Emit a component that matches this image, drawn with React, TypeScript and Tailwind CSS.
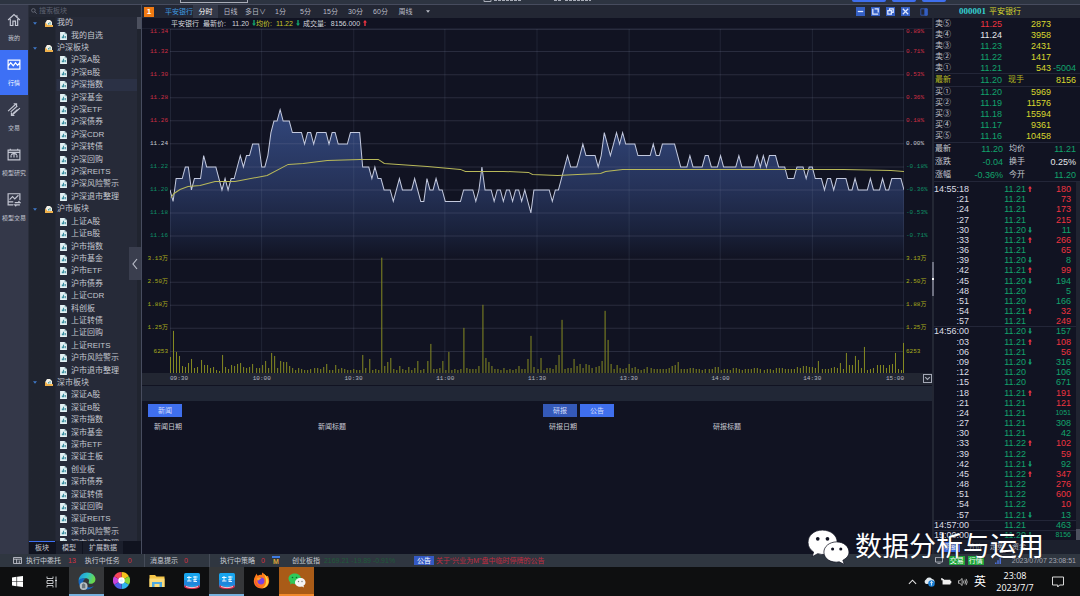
import { useState } from 'react'
import type { ReactNode } from 'react'

interface TreeGroup {
  name: string
  items: string[]
}

interface Trade {
  time: string
  price: string
  dir?: 'up' | 'down'
  vol: string
  red?: boolean
}

const TREE: TreeGroup[] = [
  { name: '我的', items: ['我的自选'] },
  {
    name: '沪深板块',
    items: ['沪深A股', '沪深B股', '沪深指数', '沪深基金', '沪深ETF', '沪深债券', '沪深CDR', '沪深转债', '沪深回购', '沪深REITS', '沪深风险警示', '沪深退市整理'],
  },
  {
    name: '沪市板块',
    items: ['上证A股', '上证B股', '沪市指数', '沪市基金', '沪市ETF', '沪市债券', '上证CDR', '科创板', '上证转债', '上证回购', '上证REITS', '沪市风险警示', '沪市退市整理'],
  },
  {
    name: '深市板块',
    items: ['深证A股', '深证B股', '深市指数', '深市基金', '深市ETF', '深证主板', '创业板', '深市债券', '深证转债', '深证回购', '深证REITS', '深市风险警示'],
  },
]

const PERIODS = ['分时', '日线', '多日∨', '1分', '5分', '15分', '30分', '60分', '周线']
const TIMES = ['09:30', '10:00', '10:30', '11:00', '11:30', '13:30', '14:00', '14:30']

const PRICE_LABELS = ['11.34', '11.32', '11.30', '11.28', '11.26', '11.24', '11.22', '11.20', '11.18', '11.16']
const PERCENT_LABELS = ['0.89%', '0.71%', '0.53%', '0.36%', '0.18%', '0.00%', '-0.18%', '-0.36%', '-0.53%', '-0.71%']
const VOLUME_LABELS = ['3.13万', '2.50万', '1.88万', '1.25万', '6253']

// [minute of session, cents above 11.00]
const PRICES: [number, number][] = [
  [0, 20], [1, 19], [2, 21], [4, 21], [5, 22], [6, 22], [7, 20], [8, 21], [10, 21], [11, 23], [12, 22], [15, 22],
  [17, 20], [18, 21], [19, 20], [20, 21], [21, 21], [23, 23], [24, 22], [25, 23], [26, 23], [27, 24], [29, 24],
  [30, 22], [31, 22], [32, 23], [33, 25], [34, 26], [35, 26], [36, 27], [37, 26], [39, 26], [40, 25], [43, 25],
  [44, 24], [45, 25], [46, 25], [47, 24], [48, 25], [51, 25], [52, 24], [53, 25], [54, 25], [55, 24], [58, 24],
  [59, 25], [62, 25], [63, 22], [65, 22], [66, 21], [67, 22], [68, 21], [69, 21], [70, 20], [72, 20], [73, 19],
  [75, 21], [76, 20], [79, 20], [80, 21], [82, 19], [83, 19], [84, 21], [85, 20], [86, 20], [87, 21], [88, 20],
  [89, 20], [90, 19], [95, 19], [96, 20], [99, 20], [100, 19], [101, 20], [102, 22], [103, 20], [105, 20],
  [106, 19], [107, 20], [108, 20], [109, 19], [110, 20], [111, 20], [112, 19], [113, 20], [114, 20], [115, 19],
  [116, 20], [117, 19], [118, 18], [119, 20], [124, 20], [125, 19], [126, 20], [127, 20], [128, 21], [130, 23],
  [131, 22], [133, 22], [134, 23], [135, 24], [136, 23], [139, 23], [140, 22], [141, 23], [142, 25], [144, 23],
  [145, 24], [146, 25], [147, 24], [148, 25], [149, 24], [152, 24], [153, 23], [157, 23], [158, 24], [159, 23],
  [160, 23], [161, 24], [165, 24], [167, 22], [169, 22], [170, 23], [171, 22], [174, 22], [175, 23], [176, 23],
  [177, 22], [179, 22], [180, 23], [181, 22], [185, 22], [186, 23], [187, 22], [191, 22], [192, 23], [193, 22],
  [194, 23], [195, 22], [196, 23], [198, 23], [199, 22], [201, 22], [202, 21], [204, 21], [205, 22], [207, 22],
  [208, 21], [209, 22], [210, 22], [211, 21], [213, 21], [214, 20], [215, 21], [216, 21], [217, 20], [218, 21],
  [221, 21], [222, 20], [223, 20], [224, 21], [225, 20], [228, 20], [229, 21], [230, 20], [232, 20], [233, 21],
  [234, 20], [235, 20], [236, 21], [239, 21], [240, 20],
]

const AVERAGE =
  '1,168 4,164 10,160 18,157 30,156 45,152 65,152 97,146 118,135 133,134 157,131 190,130 208,130 214,134 257,137 290,140 295,142 333,142 358,143 362,145 387,146 407,145 430,144 435,142 452,140 503,140 673,140 720,141 733,142'

const VOLUMES = [
  16, 42, 21, 17, 7, 6, 10, 14, 5, 6, 13, 8, 8, 5, 6, 3, 2, 18, 6, 4, 8, 7, 9, 10, 6, 5, 6, 9, 5, 5,
  8, 12, 5, 20, 17, 5, 12, 11, 11, 7, 5, 3, 5, 4, 3, 3, 4, 5, 5, 4, 6, 9, 3, 3, 8, 4, 5, 4, 3, 3,
  4, 3, 3, 18, 5, 14, 3, 4, 3, 115, 7, 11, 15, 4, 3, 7, 4, 3, 6, 3, 5, 12, 3, 4, 12, 29, 4, 4, 5, 12,
  3, 21, 3, 4, 3, 4, 45, 5, 4, 4, 4, 7, 68, 15, 11, 7, 4, 4, 3, 5, 3, 4, 3, 4, 7, 4, 4, 14, 37, 6,
  4, 15, 3, 5, 5, 4, 8, 18, 53, 4, 5, 5, 14, 7, 9, 5, 9, 8, 5, 6, 7, 12, 62, 33, 9, 4, 8, 5, 4, 5,
  9, 5, 6, 4, 3, 4, 6, 5, 4, 4, 4, 4, 4, 5, 7, 8, 11, 4, 4, 4, 5, 5, 4, 4, 3, 4, 4, 4, 6, 6,
  3, 4, 4, 3, 5, 5, 4, 3, 4, 4, 4, 5, 5, 4, 3, 4, 4, 3, 5, 5, 5, 4, 4, 4, 4, 6, 5, 7, 7, 6,
  6, 5, 12, 4, 4, 4, 5, 6, 5, 10, 4, 20, 8, 8, 17, 13, 5, 26, 3, 4, 5, 8, 8, 8, 5, 8, 9, 20, 4, 3, 30,
]

const ASKS = [
  { label: '卖⑤', price: '11.25', color: 'text-[#ee3340]', vol: '2873' },
  { label: '卖④', price: '11.24', color: 'text-gray-200', vol: '3958' },
  { label: '卖③', price: '11.23', color: 'text-[#12a36c]', vol: '2431' },
  { label: '卖②', price: '11.22', color: 'text-[#12a36c]', vol: '1417' },
  { label: '卖①', price: '11.21', color: 'text-[#12a36c]', vol: '543', change: '-5004' },
]

const BIDS = [
  { label: '买①', price: '11.20', color: 'text-[#12a36c]', vol: '5969' },
  { label: '买②', price: '11.19', color: 'text-[#12a36c]', vol: '11576' },
  { label: '买③', price: '11.18', color: 'text-[#12a36c]', vol: '15594' },
  { label: '买④', price: '11.17', color: 'text-[#12a36c]', vol: '9361' },
  { label: '买⑤', price: '11.16', color: 'text-[#12a36c]', vol: '10458' },
]

const STATS = [
  { a: '最新', av: '11.20', b: '均价', bv: '11.21', color: 'text-[#12a36c]' },
  { a: '涨跌', av: '-0.04', b: '换手', bv: '0.25%', color: 'text-gray-200' },
  { a: '涨幅', av: '-0.36%', b: '今开', bv: '11.20', color: 'text-[#12a36c]' },
]

const TRADES: Trade[] = [
  { time: '14:55:18', price: '11.21', dir: 'up', vol: '180', red: true },
  { time: ':21', price: '11.21', vol: '73', red: true },
  { time: ':24', price: '11.21', vol: '173', red: true },
  { time: ':27', price: '11.21', vol: '215', red: true },
  { time: ':30', price: '11.20', dir: 'down', vol: '11' },
  { time: ':33', price: '11.21', dir: 'up', vol: '266', red: true },
  { time: ':36', price: '11.21', vol: '65', red: true },
  { time: ':39', price: '11.20', dir: 'down', vol: '8' },
  { time: ':42', price: '11.21', dir: 'up', vol: '99', red: true },
  { time: ':45', price: '11.20', dir: 'down', vol: '194' },
  { time: ':48', price: '11.20', vol: '5' },
  { time: ':51', price: '11.20', vol: '166' },
  { time: ':54', price: '11.21', dir: 'up', vol: '32', red: true },
  { time: ':57', price: '11.21', vol: '249', red: true },
  { time: '14:56:00', price: '11.20', dir: 'down', vol: '157' },
  { time: ':03', price: '11.21', dir: 'up', vol: '108', red: true },
  { time: ':06', price: '11.21', vol: '56', red: true },
  { time: ':09', price: '11.20', dir: 'down', vol: '316' },
  { time: ':12', price: '11.20', vol: '106' },
  { time: ':15', price: '11.20', vol: '671' },
  { time: ':18', price: '11.21', dir: 'up', vol: '191', red: true },
  { time: ':21', price: '11.21', vol: '121', red: true },
  { time: ':24', price: '11.21', vol: '1051' },
  { time: ':27', price: '11.21', vol: '308' },
  { time: ':30', price: '11.21', vol: '42' },
  { time: ':33', price: '11.22', dir: 'up', vol: '102', red: true },
  { time: ':39', price: '11.22', vol: '59', red: true },
  { time: ':42', price: '11.21', dir: 'down', vol: '92' },
  { time: ':45', price: '11.22', dir: 'up', vol: '347', red: true },
  { time: ':48', price: '11.22', vol: '276', red: true },
  { time: ':51', price: '11.22', vol: '600', red: true },
  { time: ':54', price: '11.22', vol: '10', red: true },
  { time: ':57', price: '11.21', dir: 'down', vol: '13' },
  { time: '14:57:00', price: '11.21', vol: '463' },
  { time: '15:00:00', price: '11.20', dir: 'down', vol: '8156' },
]

function Arrow({ dir }: { dir: 'up' | 'down' }) {
  return (
    <svg viewBox="0 0 4 6" className={dir === 'up' ? 'w-1 h-[6px] shrink-0 text-[#ee3340]' : 'w-1 h-[6px] shrink-0 rotate-180 text-[#12a36c]'}>
      <path d="M2 0L4 2.6H2.7V6H1.3V2.6H0z" fill="currentColor" />
    </svg>
  )
}

function FileIcon() {
  return (
    <svg viewBox="0 0 12 14" className="w-[7px] h-2 shrink-0">
      <path d="M0 0h8l4 4v10H0z" fill="#e4f2f4" />
      <path d="M3 11V8h2v3zM5 11V5h2v6zM8 11V7h2v4z" fill="#3b8fa0" />
      <path d="M8 0l4 4H8z" fill="#8fb3ba" />
    </svg>
  )
}

function FolderIcon() {
  return (
    <svg viewBox="0 0 16 14" className="w-2 h-[7px] shrink-0">
      <path d="M1 5l3-5h6l4 4v6H1z" fill="#f3f0e6" />
      <path d="M6 9V6h2v3zM9 9V4h2v5z" fill="#4aa0a5" />
      <path d="M0 6l3 1 2 3h11v4H0z" fill="#efb14c" />
    </svg>
  )
}

const RAIL: { label: string; icon: ReactNode }[] = [
  { label: '我的', icon: <path d="M1 9.5L9 2l8 7.5M4 8v9h3.500v-6h3.500v6H14V8M13 3v2.500" /> },
  { label: '行情', icon: <path d="M1 3h16v12H1zM1 11l3.500-4.500 3.500 4 3-4 3 3.500 3-4" /> },
  { label: '交易', icon: <path d="M1 11L12 1M8.500 1H12.500V5M17 7L6 17M9.500 17H5.500V13M4.500 12L13.500 4M13.500 9L7 15" /> },
  { label: '模型研究', icon: <path d="M1 3h16v13H1zM1 6h16M4 3V1M14 3V1M5 13V10M9 13V8M13 13V10M5 9l4-2 4 2" /> },
  { label: '模型交易', icon: <path d="M17 10V1H1v15h7M1 12h7M3 9l4-4 3 3 5-5M10 13h7l-2-2M17 16h-7l2 2" /> },
]

function Rail() {
  const [active, setActive] = useState('行情')
  return (
    <nav className="w-[29px] shrink-0 bg-[#343849] border-r border-[#2a2e3b] flex flex-col">
      {RAIL.map(item => (
        <button
          key={item.label}
          onClick={() => setActive(item.label)}
          className={`h-[45px] shrink-0 flex flex-col items-center justify-center gap-2 text-[6px] leading-[7px] whitespace-nowrap ${
            active === item.label ? 'bg-[#3d70f5] text-white' : 'text-[#c3c6d2]'
          }`}
        >
          <svg viewBox="0 0 18 19" className="w-[14px] h-[14px]" fill="none" stroke="currentColor" strokeWidth={1.6}>
            {item.icon}
          </svg>
          {item.label}
        </button>
      ))}
    </nav>
  )
}

function Tree() {
  return (
    <aside className="relative w-[113px] shrink-0 flex flex-col bg-[#252936] border-r border-[#474c5e]">
      <label className="h-3 shrink-0 flex items-center gap-[2px] px-[2px] bg-[#232733] text-[#6d7180]">
        <svg viewBox="0 0 10 10" className="w-[6px] h-[6px]" fill="none" stroke="currentColor" strokeWidth={1.400}>
          <circle cx="4" cy="4" r="3" />
          <path d="M6.200 6.200L9.500 9.500" />
        </svg>
        <input
          aria-label="搜索板块"
          placeholder="搜索板块"
          className="min-w-0 flex-1 bg-transparent text-[7px] leading-[10px] outline-none placeholder:text-[#5d6170]"
        />
      </label>

      <div className="flex-1 min-h-0 flex">
        <ul className="flex-1 min-w-0 flex flex-col bg-linear-to-r from-[#20242f] from-[26px] to-[#262a38] to-[27px]">
          {TREE.map(group => (
            <li key={group.name} className="contents">
              <div className="flex-1 min-h-0 flex items-center pl-1 text-[8px] leading-[12px] text-[#c4c7cf]">
                <svg viewBox="0 0 6 4" className="w-1 h-[3px] mr-2" fill="#3f78c8">
                  <path d="M0 0h6L3 4z" />
                </svg>
                <FolderIcon />
                <span className="ml-1">{group.name}</span>
              </div>
              {group.items.map(item => (
                <div
                  key={item}
                  className={`flex-1 min-h-0 flex items-center pl-[31px] gap-1 text-[8px] leading-[12px] text-[#c4c7cf] whitespace-nowrap ${
                    item === '沪深指数' ? 'bg-linear-to-r from-transparent from-[27px] to-[#2b3145] to-[28px]' : ''
                  }`}
                >
                  <FileIcon />
                  {item}
                </div>
              ))}
            </li>
          ))}
          <li className="h-[3px] shrink-0 overflow-hidden flex items-start pl-[31px] gap-1 text-[8px] leading-[12px] text-[#c4c7cf]">
            <FileIcon />
            深市退市整理
          </li>
        </ul>
        <div className="w-1 bg-[#20242f]">
          <div className="h-3 bg-[#4c505e]" />
        </div>
      </div>

      <div className="h-[13px] shrink-0 flex bg-[#10131f] text-[7px] leading-[12px] text-[#c4c7cf]">
        <button className="w-[26px] border-t border-[#3d70f5]">板块</button>
        <button className="w-[28px] bg-[#1b1f2c] border-x border-[#10131f]">模型</button>
        <button className="w-[40px] bg-[#1b1f2c]">扩展数据</button>
      </div>
      <button
        aria-label="收起"
        className="absolute right-0 top-[242px] w-3 h-[33px] bg-[#3a3e4e] text-[#b9bcc8] flex items-center justify-center"
      >
        <svg viewBox="0 0 6 12" className="w-[6px] h-3" fill="none" stroke="currentColor" strokeWidth={1.200}>
          <path d="M5 1L1 6l4 5" />
        </svg>
      </button>
    </aside>
  )
}

function axisColor(i: number) {
  if (i < 5) return 'text-[#cf2f45]'
  if (i === 5) return 'text-[#c9ccd4]'
  return i < 10 ? 'text-[#0f9067]' : 'text-[#a9ab1c]'
}

function Axis({ labels, align }: { labels: string[]; align: 'left' | 'right' }) {
  return (
    <div
      className={`shrink-0 flex flex-col pb-[10px] font-['Liberation_Mono','Noto_Sans_CJK_SC',monospace] text-[6px] leading-[6px] ${
        align === 'right' ? 'w-[28px] items-end pr-[2px]' : 'w-[28px] items-start pl-[2px]'
      }`}
    >
      {labels.map((label, i) => (
        <div
          key={label}
          className={i === 0 ? 'h-[11px] flex items-start text-[#cf2f45]' : `flex-1 min-h-0 flex items-center ${axisColor(i)}`}
        >
          {label}
        </div>
      ))}
    </div>
  )
}

function Chart() {
  const minute = 733 / 240
  const points = PRICES.map(([m, c]) => `${(m * minute).toFixed(1)},${(160.500 - (c - 20) * 11.450).toFixed(1)}`).join(' ')

  return (
    <svg viewBox="0 0 733 343" preserveAspectRatio="none" className="flex-1 min-w-0 h-full">
      <defs>
        <linearGradient id="area" x1="0" y1="80" x2="0" y2="230" gradientUnits="userSpaceOnUse">
          <stop offset="0" stopColor="#32477c" />
          <stop offset="0.5" stopColor="#26335a" />
          <stop offset="0.8" stopColor="#1a223c" />
          <stop offset="1" stopColor="#111322" />
        </linearGradient>
      </defs>
      <polygon points={`0,230 ${points} 733,230`} fill="url(#area)" />
      <g stroke="#8a92b0" strokeOpacity="0.2">
        {[0, 22, 45, 68, 91, 114, 137, 160, 183, 206, 229, 252, 275, 298, 321].map(y => (
          <line key={y} x1="0" x2="733" y1={y + 0.5} y2={y + 0.5} />
        ))}
      </g>
      <g stroke="#8a92b0" strokeOpacity="0.14">
        {[0.5, 91.5, 183.5, 274.5, 366.5, 458.5, 549.5, 641.5, 732.5].map(x => (
          <line key={x} x1={x} x2={x} y1="0" y2="343" />
        ))}
      </g>
      <polyline points={points} fill="none" stroke="#c3c9de" strokeWidth="1" />
      <polyline points={AVERAGE} fill="none" stroke="#b9b95a" strokeWidth="1" />
      <g fill="#858a22">
        {VOLUMES.map((v, i) => (
          <rect key={i} x={Math.min(732, Math.round(i * minute))} y={343 - v} width="1" height={v} />
        ))}
      </g>
    </svg>
  )
}

function WindowButtons() {
  const shapes = ['M2 5h6', 'M2 2v6h6M4 2h4v4', 'M2 4h4v4H2zM4 4V2h4v4H6', 'M2 2l6 6M8 2L2 8']
  return (
    <div className="ml-auto flex items-center gap-[6px] pr-1">
      {shapes.map(d => (
        <button key={d} aria-label="窗口" className="w-[9px] h-[9px] bg-[#3560c4]">
          <svg viewBox="0 0 10 10" fill="none" stroke="#dfe8ff" strokeWidth={1.400}>
            <path d={d} />
          </svg>
        </button>
      ))}
      <svg viewBox="0 0 10 10" className="w-2 h-2 ml-1" fill="none" stroke="#3560c4">
        <path d="M1 1h8v8H1z" />
        <path d="M6 1h3v8H6z" fill="#3560c4" />
      </svg>
    </div>
  )
}

function NewsTable({ tabs, date, title }: { tabs: string[]; date: string; title: string }) {
  return (
    <section className="flex-1 pl-[6px] pt-[3px]">
      <div className="flex gap-[3px]">
        {tabs.map(tab => (
          <button
            key={tab}
            className={`w-[34px] h-[13px] text-[7px] leading-[13px] text-[#d5defc] ${tab === '研报' ? 'bg-[#3459b8]' : 'bg-[#3f6fee]'}`}
          >
            {tab}
          </button>
        ))}
      </div>
      <table className="mt-[5px] ml-[6px] text-left text-[7px] leading-[10px] text-[#c9ccd4]">
        <thead>
          <tr>
            <th className="w-[164px] font-normal">{date}</th>
            <th className="font-normal">{title}</th>
          </tr>
        </thead>
      </table>
    </section>
  )
}

function Center() {
  const [period, setPeriod] = useState('分时')
  return (
    <main className="flex-1 min-w-0 flex flex-col bg-[#111322]">
      <div className="h-[13px] shrink-0 flex items-center bg-[#232734] text-[7px] leading-[13px] text-[#b9bcc6]">
        <span className="w-[10px] h-[10px] ml-[2px] bg-[#f07a12] text-white text-[8px] leading-[10px] font-bold text-center">1</span>
        <span className="ml-[11px] text-[#3f9ae0]">平安银行</span>
        {PERIODS.map(p => (
          <button
            key={p}
            onClick={() => setPeriod(p)}
            className={`w-[25px] h-full text-center ${period === p ? 'bg-[#333848] text-white' : ''}`}
          >
            {p}
          </button>
        ))}
        <svg viewBox="0 0 6 4" className="w-1 h-[3px] ml-2" fill="currentColor">
          <path d="M0 0h6L3 4z" />
        </svg>
        <WindowButtons />
      </div>

      <div className="h-[11px] shrink-0 flex items-center pl-[29px] text-[7px] leading-[11px] text-[#d3d6dd] border-b border-[#1c1f30] whitespace-nowrap">
        <span className="mr-1">平安银行</span>
        <span className="mr-[6px]">最新价:</span>
        <span className="mr-[3px]">11.20</span>
        <Arrow dir="down" />
        <span className="mr-1 text-[#c9c92c]">均价:</span>
        <span className="mr-[3px] text-[#c9c92c]">11.22</span>
        <Arrow dir="down" />
        <span className="ml-[3px] mr-[5px]">成交量:</span>
        <span className="mr-[3px]">8156.000</span>
        <Arrow dir="up" />
      </div>

      <div className="flex-1 min-h-0 flex">
        <Axis labels={[...PRICE_LABELS, ...VOLUME_LABELS]} align="right" />
        <Chart />
        <Axis labels={[...PERCENT_LABELS, ...VOLUME_LABELS]} align="left" />
      </div>

      <div className="relative h-3 shrink-0 px-7 grid grid-cols-8 bg-[#222632] font-['Liberation_Mono',monospace] text-[6px] leading-[11px] text-[#b4b7c1]">
        {TIMES.map((t, i) => (
          <div key={t} className="flex justify-between">
            <span className={i > 0 ? '-translate-x-1/2' : ''}>{t}</span>
            {i === TIMES.length - 1 && <span>15:00</span>}
          </div>
        ))}
        <button aria-label="指标" className="absolute right-0 top-[1px] w-[9px] h-[9px] border border-[#a4a8b5]">
          <svg viewBox="0 0 6 4" className="w-full" fill="none" stroke="#a4a8b5">
            <path d="M1 1l2 2 2-2" />
          </svg>
        </button>
      </div>
      <div className="h-4 shrink-0 bg-[#212736] border-t border-[#111322]" />

      <div className="h-[153px] shrink-0 flex">
        <NewsTable tabs={['新闻']} date="新闻日期" title="新闻标题" />
        <NewsTable tabs={['研报', '公告']} date="研报日期" title="研报标题" />
      </div>
    </main>
  )
}

function BookRow({ row }: { row: { label: string; price: string; color: string; vol: string; change?: string } }) {
  return (
    <tr className="flex-1 min-h-0 flex items-center">
      <td className="w-5 text-[8px] text-[#c4c7cf]">{row.label}</td>
      <td className={`w-[47px] text-right ${row.color}`}>{row.price}</td>
      <td className="w-[49px] text-right text-[#d8d82e]">{row.vol}</td>
      <td className="w-[25px] text-right text-[#12a36c]">{row.change}</td>
    </tr>
  )
}

function Quote() {
  const digits = "font-['Liberation_Sans','Noto_Sans_CJK_SC',sans-serif] text-[9px] leading-[10px]"
  return (
    <aside className="w-[148px] shrink-0 flex bg-[#111322]">
      <div className="w-[2px] shrink-0 flex flex-col pt-[257px] bg-[#232734]">
        <div className="h-[34px] flex items-center justify-center bg-[#6d7080]">
          <span className="w-[2px] h-[2px] bg-white" />
        </div>
      </div>
      <div className="flex-1 min-w-0 flex flex-col">
        <h2 className="h-[13px] shrink-0 flex items-center pl-[25px] gap-[3px] bg-[#232734] text-[8px] leading-[13px]">
          <span className="font-['Liberation_Serif',serif] text-[9px] font-bold text-[#35cfd0]">000001</span>
          <span className="text-[#d8d82e]">平安银行</span>
        </h2>

        <table className={`flex-[124] min-h-0 flex flex-col pl-[1px] ${digits}`}>
          <tbody className="flex-1 min-h-0 flex flex-col">
            {ASKS.map(row => <BookRow key={row.label} row={row} />)}
            <tr className="flex-1 min-h-0 flex items-center border-y border-[#232638] text-[#d8d82e]">
              <td className="w-5 text-[8px] text-[#b6b81f]">最新</td>
              <td className="w-[47px] text-right text-[#12a36c]">11.20</td>
              <td className="w-[22px] text-right text-[8px] text-[#b6b81f]">现手</td>
              <td className="w-[52px] text-right">8156</td>
            </tr>
            {BIDS.map(row => <BookRow key={row.label} row={row} />)}
          </tbody>
        </table>

        <table className={`flex-[38] min-h-0 flex flex-col pl-[1px] border-y border-[#232638] ${digits}`}>
          <tbody className="flex-1 min-h-0 flex flex-col">
            {STATS.map(s => (
              <tr key={s.a} className="flex-1 min-h-0 flex items-center">
                <td className="w-5 text-[8px] text-[#c4c7cf]">{s.a}</td>
                <td className="w-12 text-right text-[#12a36c]">{s.av}</td>
                <td className="w-[22px] text-right text-[8px] text-[#c4c7cf]">{s.b}</td>
                <td className={`w-[51px] text-right ${s.color}`}>{s.bv}</td>
              </tr>
            ))}
          </tbody>
        </table>

        <div className="flex-[358] min-h-0 flex">
          <table className={`flex-1 min-w-0 min-h-0 flex flex-col pt-[2px] ${digits}`}>
            <tbody className="flex-1 min-h-0 flex flex-col">
              {TRADES.map((t, i) => (
                <tr
                  key={i}
                  className={`flex-1 min-h-0 flex items-center ${t.time.length > 3 && i > 0 ? 'bg-linear-to-b from-[#232638] from-[1px] to-transparent to-[1px]' : ''}`}
                >
                  <td className="w-[35px] text-right text-[#dcdee5]">{t.time}</td>
                  <td className="w-[57px] text-right text-[#12a36c]">{t.price}</td>
                  <td className="w-2 pl-[2px]">{t.dir && <Arrow dir={t.dir} />}</td>
                  <td
                    className={`w-[37px] text-right ${t.red ? 'text-[#ee3340]' : 'text-[#12a36c]'} ${t.vol.length > 3 ? 'text-[7px]' : ''}`}
                  >
                    {t.vol}
                  </td>
                </tr>
              ))}
            </tbody>
          </table>
          <div className="w-1 shrink-0 flex flex-col justify-end bg-[#1f2330]">
            <div className="h-[11px] bg-[#4c505e]" />
          </div>
        </div>

        <div className="h-[14px] shrink-0 flex items-center pl-2 gap-2 bg-[#1c202d] text-[7px] leading-[10px] text-[#b9bcc6]">
          <button className="w-[18px] bg-[#3f6fee] text-white">明细</button>
          <button>分价</button>
          <button>走势</button>
          <button>资金</button>
        </div>
      </div>
    </aside>
  )
}

function StatusBar() {
  return (
    <footer className="h-[13px] shrink-0 flex items-center bg-[#2f3640] text-[7px] leading-[13px] text-[#c9ccd4] whitespace-nowrap">
      <svg viewBox="0 0 10 8" className="w-[9px] h-[7px] ml-[13px] mr-1" fill="none" stroke="currentColor">
        <path d="M0.500 0.500h9v7h-9zM0.500 2.500h9M4 2.500v5M7 4v3" />
      </svg>
      <div className="w-[118px] flex">
        <span>执行中委托</span>
        <span className="ml-[7px] text-[#d63140]">13</span>
        <span className="ml-[9px]">执行中任务</span>
        <span className="ml-2 text-[#d63140]">0</span>
      </div>
      <div className="w-[65px] h-full flex pl-[5px] border-l border-[#454c58]">
        <span>消息提示</span>
        <span className="ml-[6px] text-[#d63140]">0</span>
      </div>
      <div className="h-full flex items-center pl-[10px] border-l border-[#454c58]">
        <span>执行中策略</span>
        <span className="ml-[6px] text-[#d63140]">0</span>
        <span className="ml-[7px] w-2 h-[9px] border-t-2 border-[#3f7be0] text-center text-[7px] leading-[7px] font-bold text-[#d9a53a]">M</span>
        <span className="ml-3">创业板指</span>
        <span className="ml-1 w-[90px] text-[#1f5a3a]">2169.21 -19.89 -0.91%</span>
        <span className="w-5 h-[9px] leading-[9px] text-center bg-[#3459c4] text-white">公告</span>
        <span className="ml-[2px] text-[#c22c40]">关于“兴业为M”盘中临时停牌的公告</span>
      </div>
      <div className="ml-auto flex items-center gap-[3px] pr-1">
        <svg viewBox="0 0 10 9" className="w-2 h-[7px] mr-[3px]" fill="none" stroke="currentColor">
          <path d="M0.500 0.500h9v6h-9zM3 8.500h4" />
        </svg>
        <span className="w-4 h-[9px] leading-[9px] text-center bg-[#1fa53a] text-white">交易</span>
        <span className="w-4 h-[9px] leading-[9px] text-center bg-[#1fa53a] text-white">行情</span>
        <svg viewBox="0 0 8 8" className="w-[6px] h-[6px] mx-2" fill="#4b6fd8">
          <path d="M0 6h2v2H0zM3 3h2v5H3zM6 0h2v8H6z" />
        </svg>
        <span className="text-[7px] text-[#a3a7b2]">2023/07/07 23:08:51</span>
      </div>
    </footer>
  )
}

function BrokerIcon() {
  return (
    <svg viewBox="0 0 32 32" className="w-4 h-4">
      <rect x="0" y="0" width="32" height="28" rx="3" fill="#18a5ee" />
      <path d="M0 14h32v11H0z" fill="#1f86dc" />
      <path d="M6 9h9M10 6v10M6 16h9M18 8h9M22 6v10M18 14l8-2M19 17h7" stroke="#e8f7ff" strokeWidth="2" fill="none" />
      <path d="M1 24c8 5 22 5 30 0v5c-8 4-22 4-30 0z" fill="#d7264a" />
      <path d="M4 27c7 3 17 3 24 0" stroke="#fff" strokeWidth="1.500" fill="none" />
    </svg>
  )
}

const TASKS: { name: string; tile: string; icon: ReactNode }[] = [
  {
    name: 'Edge',
    tile: 'bg-[#353739] border-[#76b0dc]',
    icon: (
      <svg viewBox="0 0 32 32" className="w-[18px] h-[18px]">
        <defs>
          <linearGradient id="edge" x1="0" y1="0" x2="1" y2="0.3">
            <stop offset="0" stopColor="#1a8ee0" />
            <stop offset="0.55" stopColor="#2fc3c8" />
            <stop offset="1" stopColor="#6ad84b" />
          </linearGradient>
        </defs>
        <path d="M1 15C2 6 9 1 16 1c9 0 15 6 15 12 0 5-4 8-8 8-3 0-5-1-4-3 2-3 0-7-5-7C8 11 5 13 1 15z" fill="url(#edge)" />
        <path d="M1 15c3-4 8-5 12-3-4 2-5 7-2 11 4 5 11 6 17 2-3 4-7 6-12 6C7 31 0 24 1 15z" fill="#1668c0" />
        <circle cx="10" cy="25" r="7" fill="#b9c0c6" />
        <path d="M7 29v-7l3-2 3 2v7z" fill="#6b757d" />
      </svg>
    ),
  },
  {
    name: 'Browser',
    tile: 'border-transparent',
    icon: (
      <svg viewBox="0 0 32 32" className="w-[17px] h-[17px]">
        <path d="M16 16L16 0A16 16 0 0 1 30 8z" fill="#f6c21c" />
        <path d="M16 16L30 8A16 16 0 0 1 30 24z" fill="#8bd63a" />
        <path d="M16 16L30 24A16 16 0 0 1 16 32z" fill="#2fb5ea" />
        <path d="M16 16V32A16 16 0 0 1 2 24z" fill="#4d5fe8" />
        <path d="M16 16L2 24A16 16 0 0 1 2 8z" fill="#c845dd" />
        <path d="M16 16L2 8A16 16 0 0 1 16 0z" fill="#f5455a" />
        <circle cx="16" cy="16" r="6" fill="#fff" />
        <circle cx="16" cy="16" r="3" fill="#dff3ff" />
      </svg>
    ),
  },
  {
    name: 'Explorer',
    tile: 'border-transparent',
    icon: (
      <svg viewBox="0 0 32 28" className="w-4 h-[14px]">
        <path d="M1 2h11l3 3h16v21H1z" fill="#f5c648" />
        <path d="M1 9h30v17H1z" fill="#fbdc7a" />
        <path d="M6 16h20v10H6z" fill="#4fa9e0" />
        <path d="M11 20h10v6H11z" fill="#fbdc7a" />
      </svg>
    ),
  },
  { name: 'QMT', tile: 'border-transparent', icon: <BrokerIcon /> },
  { name: 'QMT 2', tile: 'bg-[#353739] border-[#76b0dc]', icon: <BrokerIcon /> },
  {
    name: 'Firefox',
    tile: 'border-transparent',
    icon: (
      <svg viewBox="0 0 32 32" className="w-[17px] h-[17px]">
        <path d="M4 8c1-2 2-4 3-5 0 2 1 3 2 4 3-2 6-2 8-1-1-2 0-4 1-5 3 4 6 5 8 7l2-1c5 9 3 23-12 24C3 31-2 18 4 8z" fill="#ff7a1a" />
        <path d="M20 3c4 4 9 9 9 15 0 7-6 12-12 13 9-5 10-16 3-28z" fill="#ffd23c" />
        <path d="M4 14c-1 9 6 16 14 15-7 0-12-5-14-15z" fill="#f0325a" />
        <circle cx="15" cy="17" r="6.500" fill="#7a42e0" />
        <path d="M7 12c3-2 6-2 9 0-2 1-4 1-5 4-2-1-4-2-4-4z" fill="#ffa62b" />
      </svg>
    ),
  },
  {
    name: '微信',
    tile: 'bg-[#a95b17] border-[#f08a2c]',
    icon: (
      <svg viewBox="0 0 36 30" className="w-[18px] h-[15px]">
        <path d="M13 1C6 1 1 6 1 11c0 4 2 6 4 8l-1 4 4-2c9 3 18-2 18-10C26 5 20 1 13 1z" fill="#2fc95a" />
        <path d="M25 10c-6 0-11 4-11 9 0 6 7 10 14 8l4 2-1-4c2-1 4-3 4-6 0-5-4-9-10-9z" fill="#f4f4f4" />
        <circle cx="9" cy="9" r="1.600" fill="#0d6b2c" />
        <circle cx="17" cy="9" r="1.600" fill="#0d6b2c" />
        <circle cx="21" cy="17" r="1.400" fill="#777" />
        <circle cx="28" cy="17" r="1.400" fill="#777" />
      </svg>
    ),
  },
]

function Taskbar() {
  return (
    <div className="h-[29px] shrink-0 flex items-center bg-[#0e0f10] text-white">
      <button aria-label="开始" className="w-[34px] h-full flex items-center justify-center">
        <svg viewBox="0 0 22 22" className="w-[11px] h-[11px]" fill="#fff">
          <path d="M0 3l9-1.300V10.500H0zM10.200 1.500L22 0v10.500H10.200zM0 11.700h9v8.800L0 19.200zM10.200 11.700H22V22l-11.800-1.600z" />
        </svg>
      </button>
      <button aria-label="任务视图" className="w-[35px] h-full flex items-center justify-center">
        <svg viewBox="0 0 24 24" className="w-3 h-3" fill="none" stroke="#d5d7da" strokeWidth={1.800}>
          <path d="M2 1v4h12V1M2 9h12v6H2zM2 23v-4h12v4M20 1v22M18 9h4" />
        </svg>
      </button>
      {TASKS.map(task => (
        <button key={task.name} aria-label={task.name} className={`w-[35px] h-full flex items-center justify-center border-b-2 ${task.tile}`}>
          {task.icon}
        </button>
      ))}

      <div className="ml-auto flex items-center gap-[6px] pr-4">
        <svg viewBox="0 0 10 6" className="w-[9px] h-[6px]" fill="none" stroke="#e5e5e5" strokeWidth={1.200}>
          <path d="M1 5l4-4 4 4" />
        </svg>
        <svg viewBox="0 0 24 20" className="w-3 h-[10px]">
          <path d="M6 14a5 5 0 0 1 0-9 7 7 0 0 1 12-1 5 5 0 0 1 3 9z" fill="#dfe7ec" />
          <circle cx="17" cy="13" r="6.500" fill="#1b7fd4" />
          <path d="M17 9v8M14.500 11.500L17 9l2.500 2.500" stroke="#fff" strokeWidth="1.500" fill="none" />
        </svg>
        <svg viewBox="0 0 24 16" className="w-[11px] h-[7px]" fill="#f0f0f0">
          <path d="M3 4h18v3h2v5h-2v3H3zM0 0h3v2h3v3H0z" />
        </svg>
        <svg viewBox="0 0 22 18" className="w-[10px] h-2" fill="none" stroke="#f0f0f0" strokeWidth={1.600}>
          <path d="M1 6h3l5-5v16l-5-5H1zM12 6q2 3 0 6M15 4q4 5 0 10M18 2q5 7 0 14" />
        </svg>
        <span className="text-[12px] leading-[14px]">英</span>
        <div className="w-[46px] text-center font-['Open_Sans','Noto_Sans',sans-serif] text-[9px] leading-[12px]">
          <div>23:08</div>
          <div>2023/7/7</div>
        </div>
        <svg viewBox="0 0 24 24" className="w-3 h-3 ml-2" fill="none" stroke="#f0f0f0" strokeWidth={1.800}>
          <path d="M1 2h22v16h-8l-3.500 4V18H1z" />
        </svg>
      </div>
    </div>
  )
}

function Watermark() {
  return (
    <div className="absolute right-[36px] bottom-[30px] flex items-center gap-[5px] text-white pointer-events-none">
      <svg viewBox="0 0 84 70" className="w-[43px] h-9" stroke="#111322" strokeWidth="1.500">
        <path d="M30 2C13 2 2 13 2 26c0 8 4 14 11 19l-3 9 11-6c20 6 38-5 38-22C59 12 46 2 30 2z" fill="#fff" />
        <path d="M58 25c-14 0-25 9-25 20 0 13 14 22 30 19l10 5-3-8c7-4 12-9 12-16 0-11-10-20-24-20z" fill="#fff" />
        <g fill="#111322" stroke="none">
          <circle cx="21" cy="19" r="3.600" />
          <circle cx="40" cy="19" r="3.600" />
          <circle cx="50" cy="39" r="3" />
          <circle cx="66" cy="39" r="3" />
        </g>
      </svg>
      <span className="text-[27px] leading-[38px] [text-shadow:0_0_2px_#111322]">数据分析与运用</span>
    </div>
  )
}

export default function App() {
  return (
    <div className="relative h-screen flex flex-col overflow-hidden bg-[#111322] font-['Liberation_Sans','Noto_Sans_CJK_SC',sans-serif]">
      <header className="h-[5px] shrink-0 flex items-start bg-[#2d3441] border-b border-[#474c5e]">
        <div className="ml-[180px] w-[68px] h-[3px] border-x border-b border-[#a9adb8]" />
        <svg viewBox="0 0 110 3" className="w-[110px] h-[3px] ml-[235px]" fill="none" stroke="#a9adb8">
          <path d="M1 0v1.500h7V0" />
          <path d="M11 0.500h28M71 0.500h8M82 0.500h26" strokeDasharray="3 1" />
        </svg>
        <div className="ml-auto mr-[134px] flex gap-[6px]">
          <span className="w-[34px] h-[2px] rounded-b bg-[#3f6fee]" />
          <span className="w-[24px] h-[2px] rounded-b bg-[#3f6fee]" />
          <span className="w-[24px] h-[2px] rounded-b bg-[#3f6fee]" />
        </div>
      </header>
      <div className="flex-1 min-h-0 flex">
        <Rail />
        <Tree />
        <Center />
        <Quote />
      </div>
      <StatusBar />
      <Taskbar />
      <Watermark />
    </div>
  )
}
